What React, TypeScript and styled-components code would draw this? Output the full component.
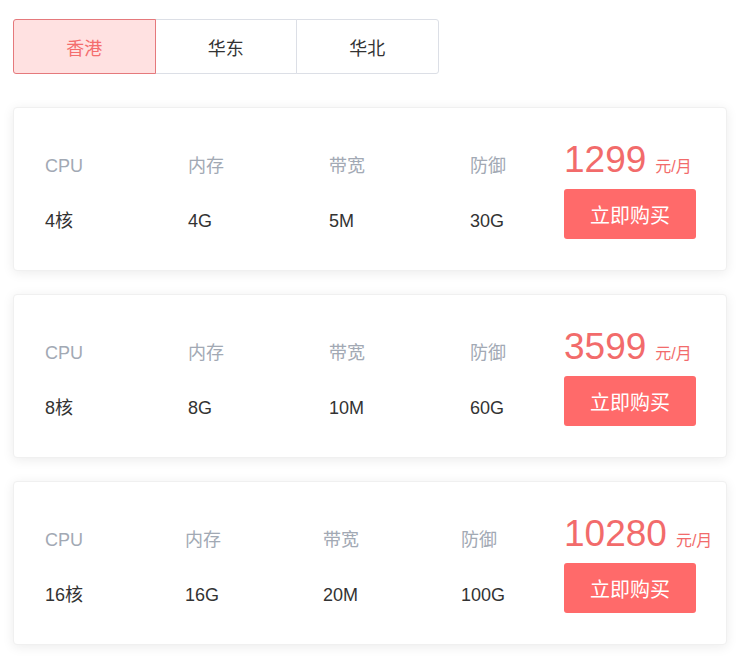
import styled, { createGlobalStyle } from 'styled-components';
import { useState } from 'react';

const GlobalStyle = createGlobalStyle`
  body {
    margin: 0;
    background: #fff;
    font-family: "Liberation Sans", "Noto Sans CJK SC", sans-serif;
  }
`;

const ScPage = styled.div`
  padding: 19px 18px 20px 13px;
`;

const ScTabs = styled.div`
  display: flex;
  margin-bottom: 33px;
`;

const ScTab = styled.button<{ $active: boolean }>`
  width: 142.5px;
  height: 55px;
  padding: 0;
  margin-left: -1px;
  font-family: inherit;
  font-size: 18px;
  cursor: pointer;
  border: 1px solid ${(p) => (p.$active ? '#e5797c' : '#dcdfe6')};
  background: ${(p) => (p.$active ? '#ffe1e1' : '#fff')};
  color: ${(p) => (p.$active ? '#f46d6d' : '#333')};
  position: relative;
  z-index: ${(p) => (p.$active ? 1 : 0)};

  &:first-child {
    margin-left: 0;
    border-radius: 3px 0 0 3px;
  }
  &:last-child {
    border-radius: 0 3px 3px 0;
  }
`;

const ScList = styled.div`
  display: flex;
  flex-direction: column;
  gap: 23px;
`;

const ScCard = styled.div<{ $cols: string }>`
  box-sizing: border-box;
  height: 164px;
  padding: 34px 0 0 31px;
  display: grid;
  grid-template-columns: ${(p) => p.$cols};
  align-items: start;
  background: #fff;
  border: 1px solid #f0f0f0;
  border-radius: 4px;
  box-shadow: 0 2px 12px rgba(0, 0, 0, 0.08);
`;

const ScSpec = styled.div`
  padding-top: 12px;
  display: flex;
  flex-direction: column;
  gap: 31px;
  font-size: 18px;
  line-height: 24px;
`;

const ScLabel = styled.div`
  color: #a2a9b4;
`;

const ScValue = styled.div`
  color: #333;
`;

const ScPriceBox = styled.div`
  display: flex;
  flex-direction: column;
  align-items: flex-start;
`;

const ScPrice = styled.div`
  color: #f26b6b;
  font-size: 37px;
  line-height: 36px;
  height: 36px;
  white-space: nowrap;

  span {
    font-size: 16px;
    line-height: 16px;
    margin-left: 9px;
  }
`;

const ScBuy = styled.button`
  margin-top: 11px;
  width: 132px;
  height: 50px;
  border: none;
  border-radius: 3px;
  background: #ff6a6a;
  color: #fff;
  font-family: inherit;
  font-size: 20px;
  cursor: pointer;
`;

const regions = ['香港', '华东', '华北'];

const plans = [
  { cpu: '4核', mem: '4G', bw: '5M', ddos: '30G', price: 1299, cols: '143px 141px 141px 94px auto' },
  { cpu: '8核', mem: '8G', bw: '10M', ddos: '60G', price: 3599, cols: '143px 141px 141px 94px auto' },
  { cpu: '16核', mem: '16G', bw: '20M', ddos: '100G', price: 10280, cols: '140px 138px 138px 103px auto' },
];

const Spec = ({ label, value }: { label: string; value: string }) => (
  <ScSpec>
    <ScLabel>{label}</ScLabel>
    <ScValue>{value}</ScValue>
  </ScSpec>
);

export default function App() {
  const [region, setRegion] = useState(0);

  return (
    <ScPage>
      <GlobalStyle />
      <ScTabs>
        {regions.map((r, i) => (
          <ScTab key={r} $active={i === region} onClick={() => setRegion(i)}>
            {r}
          </ScTab>
        ))}
      </ScTabs>
      <ScList>
        {plans.map((p) => (
          <ScCard key={p.price} $cols={p.cols}>
            <Spec label="CPU" value={p.cpu} />
            <Spec label="内存" value={p.mem} />
            <Spec label="带宽" value={p.bw} />
            <Spec label="防御" value={p.ddos} />
            <ScPriceBox>
              <ScPrice>
                {p.price}
                <span>元/月</span>
              </ScPrice>
              <ScBuy>立即购买</ScBuy>
            </ScPriceBox>
          </ScCard>
        ))}
      </ScList>
    </ScPage>
  );
}
